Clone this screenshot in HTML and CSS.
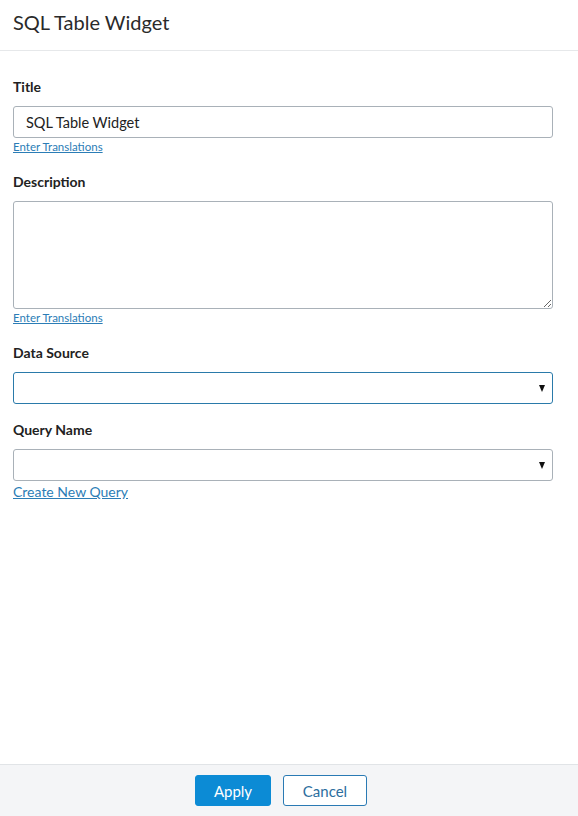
FILE: index.html
```html
<!DOCTYPE html>
<html lang="en">
<head>
<meta charset="utf-8">
<title>SQL Table Widget</title>
<link rel="stylesheet" href="styles.css">
</head>
<body>
<div class="dialog">
  <header class="dialog-header">
    <h1 class="dialog-title">SQL Table Widget</h1>
  </header>
  <main class="dialog-body">
    <div class="field">
      <label class="field-label">Title</label>
      <input class="text-input" type="text" value="SQL Table Widget">
      <a class="small-link" href="#">Enter Translations</a>
    </div>
    <div class="field">
      <label class="field-label">Description</label>
      <textarea class="text-area"></textarea>
      <a class="small-link" href="#">Enter Translations</a>
    </div>
    <div class="field field-compact">
      <label class="field-label">Data Source</label>
      <div class="select select-focused"><span class="select-arrow"></span></div>
    </div>
    <div class="field">
      <label class="field-label">Query Name</label>
      <div class="select"><span class="select-arrow"></span></div>
      <a class="link" href="#">Create New Query</a>
    </div>
  </main>
  <footer class="dialog-footer">
    <button class="btn btn-primary">Apply</button>
    <button class="btn btn-secondary">Cancel</button>
  </footer>
</div>
</body>
</html>
```
FILE: styles.css
```css
* { box-sizing: border-box; }
html, body { margin: 0; padding: 0; height: 100%; }
body {
  font-family: Lato, "Open Sans", "Liberation Sans", sans-serif;
  color: #222;
  background: #fff;
}
.dialog {
  display: flex;
  flex-direction: column;
  height: 816px;
}
.dialog-header {
  height: 51px;
  border-bottom: 1px solid #e6e8ea;
  padding: 0 13px;
  display: flex;
  align-items: center;
}
.dialog-title {
  margin: 0;
  font-size: 20px;
  font-weight: 400;
  color: #2a2a2a;
  position: relative;
  top: -3px;
}
.dialog-body {
  flex: 1;
  padding: 26px 25px 0 13px;
}
.field {
  display: flex;
  flex-direction: column;
  align-items: flex-start;
  margin-bottom: 17px;
}
.field-compact {
  margin-bottom: 16px;
}
.field-label {
  font-size: 14px;
  font-weight: 700;
  line-height: 20px;
  color: #222;
  margin-bottom: 9px;
}
.text-input {
  width: 100%;
  height: 32px;
  border: 1px solid #a9b1b8;
  border-radius: 3px;
  padding: 0 12px;
  font-family: inherit;
  font-size: 14.5px;
  color: #222;
  outline: none;
}
.text-area {
  width: 100%;
  height: 108px;
  border: 1px solid #a9b1b8;
  border-radius: 3px;
  font-family: inherit;
  resize: vertical;
  outline: none;
  display: block;
}
.small-link {
  font-size: 11.5px;
  line-height: 16px;
  margin-top: 1px;
  color: #2b7db6;
  text-decoration: underline;
}
.select {
  width: 100%;
  height: 32px;
  border: 1px solid #a9b1b8;
  border-radius: 3px;
  display: flex;
  align-items: center;
  justify-content: flex-end;
  padding-right: 7px;
}
.select-focused {
  border-color: #2a7aaa;
}
.select-arrow {
  width: 0;
  height: 0;
  border-left: 3.5px solid transparent;
  border-right: 3.5px solid transparent;
  border-top: 7px solid #111;
}
.link {
  font-size: 14px;
  line-height: 18px;
  margin-top: 2px;
  color: #2b7db6;
  text-decoration: underline;
}
.dialog-footer {
  height: 52px;
  border-top: 1px solid #e1e4e7;
  background: #f4f5f7;
  display: flex;
  justify-content: center;
  align-items: center;
  gap: 12px;
  padding-right: 16px;
}
.btn {
  height: 31px;
  border-radius: 3px;
  font-family: inherit;
  font-size: 15px;
  cursor: pointer;
}
.btn-primary {
  width: 76px;
  background: #0c8bd5;
  border: 1px solid #0c8bd5;
  color: #fff;
}
.btn-secondary {
  width: 84px;
  background: #fff;
  border: 1px solid #2a7ab4;
  color: #2c6e9e;
}
```
